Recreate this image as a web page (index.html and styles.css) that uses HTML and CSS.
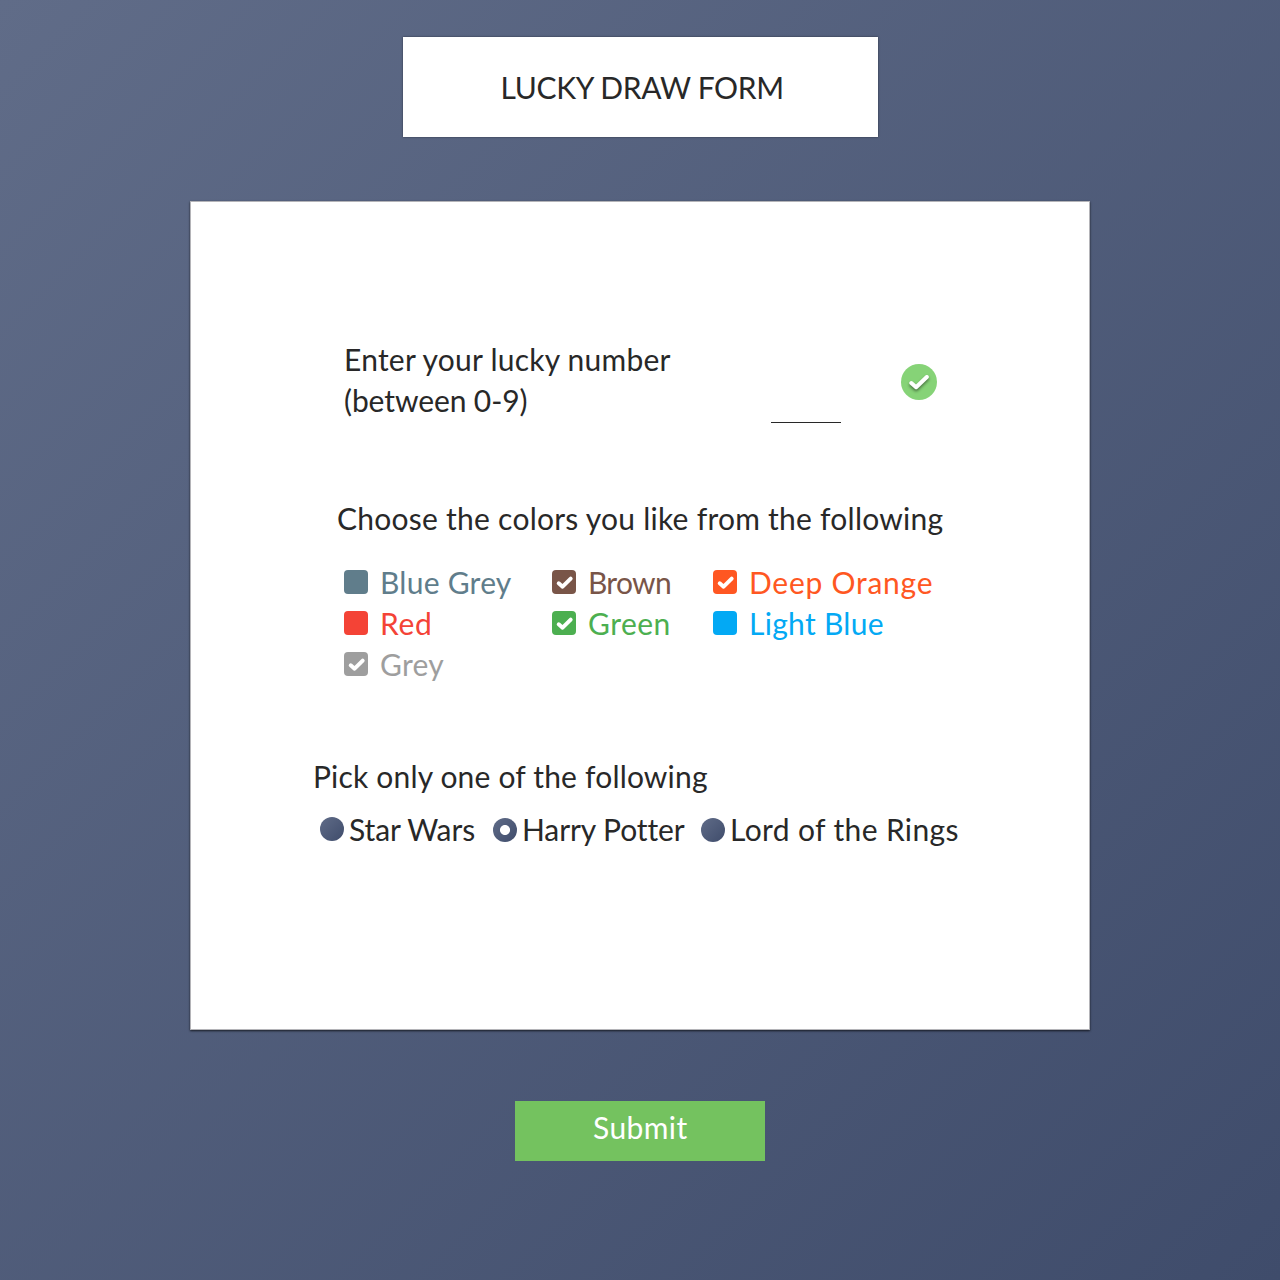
FILE: index.html
```
<!DOCTYPE html>
<html lang="en">
<head>
<meta charset="utf-8">
<title>Lucky Draw Form</title>
<link rel="stylesheet" href="styles.css">
</head>
<body>
<svg class="defs" width="0" height="0"><symbol id="check" viewBox="0 0 24 24"><path d="M6.7 13.2 10.6 16.7 18.7 8.6" fill="none" stroke="#fff" stroke-width="3.9" stroke-linecap="round" stroke-linejoin="round"/></symbol></svg>
<header class="title"><h1><span class="t-title">LUCKY DRAW FORM</span></h1></header>
<main class="card">
  <section class="number">
    <p class="prompt"><span class="t-enter">Enter your lucky number</span><br><span class="t-between">(between 0-9)</span></p>
    <div class="field"></div>
    <svg class="valid" viewBox="0 0 36 36"><circle cx="18" cy="18" r="18" fill="#86d377"/><path class="tick" d="M10.3 19 15.1 23.2 25.8 13" fill="none" stroke="#fff" stroke-width="4" stroke-linecap="round" stroke-linejoin="round"/></svg>
  </section>
  <h2 class="choose"><span class="t-choose">Choose the colors you like from the following</span></h2>
  <section class="colors">
    <label class="color bluegrey"><i class="box"></i><span class="t-bluegrey">Blue Grey</span></label>
    <label class="color brown"><i class="box"><svg><use href="#check"/></svg></i><span class="t-brown">Brown</span></label>
    <label class="color orange"><i class="box"><svg><use href="#check"/></svg></i><span class="t-orange">Deep Orange</span></label>
    <label class="color red"><i class="box"></i><span class="t-red">Red</span></label>
    <label class="color green"><i class="box"><svg><use href="#check"/></svg></i><span class="t-green">Green</span></label>
    <label class="color blue"><i class="box"></i><span class="t-blue">Light Blue</span></label>
    <label class="color grey"><i class="box"><svg><use href="#check"/></svg></i><span class="t-grey">Grey</span></label>
  </section>
  <h2 class="pick"><span class="t-pick">Pick only one of the following</span></h2>
  <section class="radios">
    <label class="radio first"><i class="dot"></i><span class="t-star">Star Wars</span></label>
    <label class="radio"><i class="dot on"></i><span class="t-harry">Harry Potter</span></label>
    <label class="radio"><i class="dot"></i><span class="t-lord">Lord of the Rings</span></label>
  </section>
</main>
<button class="submit"><span class="t-submit">Submit</span></button>
</body>
</html>
```
FILE: styles.css
```
* { box-sizing: border-box; }
body {
  margin: 0;
  height: 1280px;
  padding-top: 37px;
  display: flex;
  flex-direction: column;
  align-items: center;
  overflow: hidden;
  background: linear-gradient(135deg, #606c88, #3f4c6b);
  font: 30px/41px Lato, sans-serif;
  font-variant-ligatures: none;
  color: #282828;
}
h1, h2, p { margin: 0; font: inherit; }
span { white-space: nowrap; }
.defs { position: absolute; }
.title {
  width: 475px;
  height: 100px;
  padding: 30px 0 0 98px;
  background: #fff;
  box-shadow: 0 0 2px rgba(0, 0, 0, .5);
}
.card {
  width: 900px;
  height: 829px;
  margin-top: 64px;
  padding-top: 137px;
  background: #fff;
  border: 1px solid #b4b4b8;
  box-shadow: 0 1px 2px rgba(0, 0, 0, .7);
}
.number { display: flex; height: 159px; padding-left: 153px; }
.prompt { width: 427px; }
.field { width: 70px; height: 84px; border-bottom: 1px solid #282828; }
.valid { width: 36px; height: 36px; margin: 25px 0 0 60px; }
.tick { filter: drop-shadow(0 2px 1.5px rgba(0, 0, 0, .45)); }
.choose { height: 64px; padding-left: 146px; }
.colors {
  display: grid;
  grid-template-columns: 208px 161px 240px;
  grid-auto-rows: 41px;
  height: 194px;
  padding-left: 153px;
}
.color { display: flex; gap: 12px; }
.box { width: 24px; height: 24px; margin-top: 8px; border-radius: 4px; background: currentColor; }
.box svg { display: block; width: 24px; height: 24px; }
.bluegrey { color: #607d8b; }
.brown { color: #795548; }
.orange { color: #ff5722; }
.red { color: #f44336; }
.green { color: #4caf50; }
.blue { color: #03a9f4; }
.grey { color: #9e9e9e; }
.pick { height: 53px; padding-left: 122px; }
.radios { display: grid; grid-template-columns: 173px 208px 270px; padding-left: 129px; }
.radio { display: flex; gap: 5px; }
.dot { width: 24px; height: 24px; margin-top: 9px; border-radius: 50%; background: linear-gradient(135deg, #606c88, #3f4c6b); }
.first .dot { margin-top: 8px; }
.on { background: radial-gradient(circle, #fff 4.6px, transparent 5.4px), linear-gradient(135deg, #606c88, #3f4c6b); }
.submit {
  width: 250px;
  height: 60px;
  margin-top: 71px;
  padding: 6px 0 0 78px;
  display: flex;
  border: 0;
  background: #74c25f;
  color: #fff;
  font: inherit;
}
.t-title { letter-spacing: -.33px; }
.t-enter { letter-spacing: .23px; }
.t-between { letter-spacing: -.1px; }
.t-choose { letter-spacing: .25px; }
.t-bluegrey { letter-spacing: .25px; }
.t-brown { letter-spacing: -.7px; }
.t-orange { letter-spacing: .75px; }
.t-red { letter-spacing: .7px; }
.t-green { letter-spacing: .45px; }
.t-blue { letter-spacing: .3px; }
.t-grey { letter-spacing: .25px; }
.t-pick { letter-spacing: .18px; }
.t-star { letter-spacing: -.1px; }
.t-harry { letter-spacing: -.1px; }
.t-lord { letter-spacing: .37px; }
.t-submit { letter-spacing: .4px; }
```
